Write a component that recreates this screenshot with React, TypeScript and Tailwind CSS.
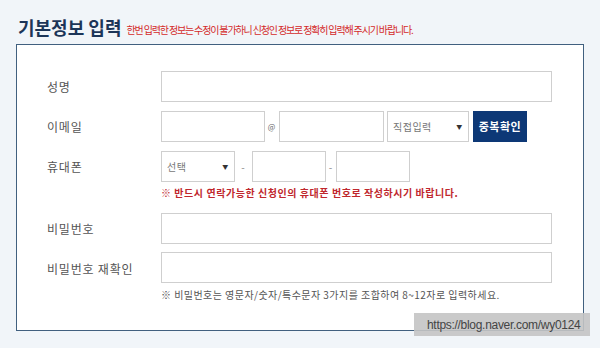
import React from "react";

const font = { fontFamily: '"Noto Sans CJK KR", "Noto Sans", sans-serif' };

function Box({ w, h = "h-[31px]" }: { w: string; h?: string }) {
  return <div className={`${w} ${h} border border-[#cfcfcf] bg-white`} />;
}

function Select({ w, label }: { w: string; label: string }) {
  return (
    <div className={`${w} h-[31px] border border-[#cfcfcf] bg-white flex items-center justify-between pl-[5px] pr-[5px]`}>
      <span className="text-[10px] text-[#777] tracking-[0.5px]">{label}</span>
      <span className="text-[6px] text-[#333]">▼</span>
    </div>
  );
}

export default function App() {
  return (
    <div className="relative w-[600px] h-[348px] bg-[#f1f5f9] overflow-hidden" style={font}>
      <div className="flex items-end pl-[18px] pt-[13px] h-[36px]">
        <h1 className="text-[18px] font-bold text-[#1c3558] leading-none tracking-[0px]">기본정보 입력</h1>
        <span className="ml-[5px] text-[10px] text-[#d42a2a] leading-none tracking-[-1.15px] mb-[1px]">
          한번 입력한 정보는 수정이 불가하니 신청인 정보로 정확히 입력해 주시기 바랍니다.
        </span>
      </div>
      <div className="ml-[16px] mt-[8px] w-[568px] h-[287px] border border-[#41607f] bg-white pt-[26px] pl-[30px]">
        <div className="grid grid-cols-[114px_1fr] gap-y-[9px] items-center text-[12px] text-[#555] tracking-[0.8px]">
          <div>성명</div>
          <Box w="w-[391px]" />

          <div>이메일</div>
          <div className="flex items-center">
            <Box w="w-[104px]" />
            <span className="w-[14px] text-center text-[8px] text-[#666]">@</span>
            <Box w="w-[105px]" />
            <div className="w-[3px]" />
            <Select w="w-[82px]" label="직접입력" />
            <div className="w-[4px]" />
            <div className="w-[54px] h-[31px] bg-[#0d3876] text-white text-[11px] font-bold flex items-center justify-center tracking-[0.5px]">
              중복확인
            </div>
          </div>

          <div className="self-start pt-[7px]">휴대폰</div>
          <div className="flex flex-col">
            <div className="flex items-center">
              <Select w="w-[74px]" label="선택" />
              <span className="w-[17px] text-center text-[#888] text-[10px]">-</span>
              <Box w="w-[74px]" />
              <span className="w-[10px] text-center text-[#888] text-[10px]">-</span>
              <Box w="w-[74px]" />
            </div>
            <div className="mt-[4px] text-[10px] font-bold text-[#c0272d] tracking-[0.55px] leading-[14px]">
              ※ 반드시 연락가능한 신청인의 휴대폰 번호로 작성하시기 바랍니다.
            </div>
          </div>

          <div className="pt-[4px]">비밀번호</div>
          <div className="pt-[4px]"><Box w="w-[391px]" /></div>

          <div className="self-start pt-[7px]">비밀번호 재확인</div>
          <div className="flex flex-col -mt-[1px]">
            <Box w="w-[391px]" />
            <div className="mt-[5px] text-[10px] text-[#555] tracking-[0.45px] leading-[14px]">
              ※ 비밀번호는 영문자/숫자/특수문자 3가지를 조합하여 8~12자로 입력하세요.
            </div>
          </div>
        </div>
      </div>
      <div
        className="absolute left-[414px] top-[313px] w-[176px] h-[23px] bg-[#c4c4c4]/90 flex items-center pl-[13px] text-[12px] text-[#444] tracking-[-0.3px] whitespace-nowrap"
        style={{ fontFamily: '"Liberation Sans", "Noto Sans", sans-serif' }}
      >
        https://blog.naver.com/wy0124
      </div>
    </div>
  );
}
